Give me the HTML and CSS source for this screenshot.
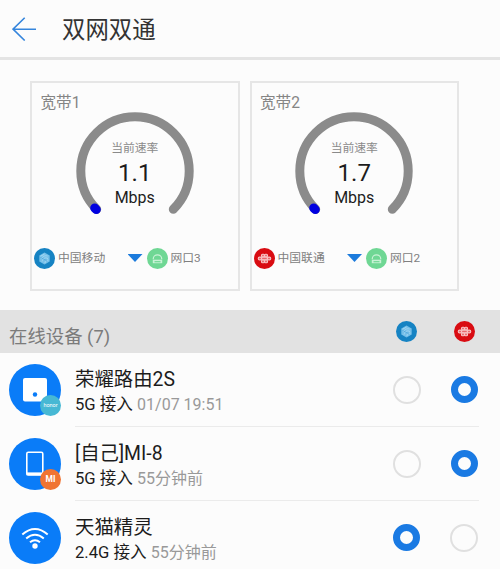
FILE: index.html
```html
<!DOCTYPE html>
<html lang="zh-CN">
<head>
    <meta charset="UTF-8">
    <meta name="viewport" content="width=device-width, initial-scale=1.0">
    <title>双网双通</title>
    <link rel="stylesheet" href="styles.css">
</head>
<body>
    <!-- shared icons -->
    <svg class="defs" width="0" height="0">
        <symbol id="mobile" viewBox="0 0 21 21">
            <circle cx="10.5" cy="10.5" r="10.5" fill="#1683c3"/>
            <path d="M10.5 4.5l5.2 3v6l-5.2 3-5.2-3v-6z" fill="#75bfe9"/>
            <path d="M6.5 8.2l4-2M7 11c2-3 4-3.6 6.5-3M8 13.5c1-3 3-4.5 6-3M11 15c0-2 1-3 3.5-3" fill="none" stroke="#a5d8f3" stroke-width="1"/>
            <path d="M6.3 9.7c2.5.2 3.7 2.5 6.7 2.7" fill="none" stroke="#4aa3da" stroke-width=".7"/>
        </symbol>
        <symbol id="unicom" viewBox="0 0 21 21">
            <circle cx="10.5" cy="10.5" r="10.5" fill="#d90c12"/>
            <g fill="#e8686c" stroke="#f8c4c5" stroke-width="1.1">
                <rect x="7.5" y="6.3" width="3" height="2.7" rx="1"/>
                <rect x="10.5" y="6.3" width="3" height="2.7" rx="1"/>
                <rect x="4.3" y="9.1" width="3.3" height="2.8" rx="1.2"/>
                <rect x="7.6" y="9.1" width="5.8" height="2.8" rx="1"/>
                <rect x="13.4" y="9.1" width="3.3" height="2.8" rx="1.2"/>
                <rect x="7.5" y="12" width="3" height="2.7" rx="1"/>
                <rect x="10.5" y="12" width="3" height="2.7" rx="1"/>
            </g>
        </symbol>
        <symbol id="port" viewBox="0 0 21 21">
            <circle cx="10.5" cy="10.5" r="10.5" fill="#6fd794"/>
            <path d="M6.3 11.2v-.7a4.2 3.7 0 0 1 8.4 0v.7" fill="none" stroke="#c9f2d6" stroke-width="1.2"/>
            <path d="M5.8 11.7h9.4v3.5H5.8z" fill="#c9f2d6"/>
            <path d="M7.5 13.7h6" stroke="#6fd794" stroke-width="1.2"/>
        </symbol>
        <symbol id="gauge" viewBox="0 0 118 118">
            <path d="M20.7 97.3a54.2 54.2 0 1 1 76.6 0" fill="none" stroke="#8b8b8b" stroke-width="9" stroke-linecap="round"/>
            <path d="M18.7 96l1.6 1.6" fill="none" stroke="#0000e0" stroke-width="9" stroke-linecap="round"/>
        </symbol>
    </svg>

    <header class="topbar">
        <svg class="back" width="24" height="24" viewBox="0 0 24 24">
            <path d="M12.7 .7L1 12.2l11.7 11.3M1 12.2h23" fill="none" stroke="#3585dc" stroke-width="1.6"/>
        </svg>
        <h1>双网双通</h1>
    </header>

    <section class="cards">
        <div class="card">
            <h2>宽带1</h2>
            <div class="gauge">
                <svg width="118" height="118"><use href="#gauge"/></svg>
                <div class="reading">
                    <span class="label">当前速率</span>
                    <span class="speed">1.1</span>
                    <span class="unit">Mbps</span>
                </div>
            </div>
            <div class="links">
                <svg width="21" height="21"><use href="#mobile"/></svg>
                <span class="isp">中国移动</span>
                <span class="arrow"></span>
                <svg width="21" height="21"><use href="#port"/></svg>
                <span>网口3</span>
            </div>
        </div>
        <div class="card">
            <h2>宽带2</h2>
            <div class="gauge">
                <svg width="118" height="118"><use href="#gauge"/></svg>
                <div class="reading">
                    <span class="label">当前速率</span>
                    <span class="speed">1.7</span>
                    <span class="unit">Mbps</span>
                </div>
            </div>
            <div class="links">
                <svg width="21" height="21"><use href="#unicom"/></svg>
                <span class="isp">中国联通</span>
                <span class="arrow"></span>
                <svg width="21" height="21"><use href="#port"/></svg>
                <span>网口2</span>
            </div>
        </div>
    </section>

    <div class="list-head">
        <h3>在线设备 (7)</h3>
        <div class="choice">
            <svg width="21" height="21"><use href="#mobile"/></svg>
            <svg width="21" height="21"><use href="#unicom"/></svg>
        </div>
    </div>

    <ul class="devices">
        <li>
            <div class="avatar">
                <svg width="52" height="52" viewBox="0 0 52 52">
                    <rect x="14" y="14" width="24" height="23.5" rx="2" fill="#fff"/>
                    <circle cx="26" cy="30.5" r="2.2" fill="#0a7cf8"/>
                </svg>
                <span class="badge honor">honor</span>
            </div>
            <div class="info">
                <div class="text">
                    <p class="name">荣耀路由2S</p>
                    <p class="meta">5G 接入 <span>01/07 19:51</span></p>
                </div>
                <div class="choice">
                    <span class="radio"></span>
                    <span class="radio on"></span>
                </div>
            </div>
        </li>
        <li>
            <div class="avatar">
                <svg width="52" height="52" viewBox="0 0 52 52">
                    <rect x="17.8" y="14.2" width="16" height="22.8" rx="1.5" fill="none" stroke="#fff" stroke-width="1.6"/>
                    <path d="M17.5 35.8h16.5" stroke="#fff" stroke-width="2.8"/>
                </svg>
                <span class="badge mi">MI</span>
            </div>
            <div class="info">
                <div class="text">
                    <p class="name">[自己]MI-8</p>
                    <p class="meta">5G 接入 <span>55分钟前</span></p>
                </div>
                <div class="choice">
                    <span class="radio"></span>
                    <span class="radio on"></span>
                </div>
            </div>
        </li>
        <li>
            <div class="avatar">
                <svg width="52" height="52" viewBox="0 0 52 52">
                    <g fill="none" stroke="#fff" stroke-width="2">
                        <path d="M13.3 22.5q12.7-11 25.4 0"/>
                        <path d="M17.2 26.5q8.800-7.5 17.6 0"/>
                        <path d="M21 30.3q5-4 10 0"/>
                    </g>
                    <circle cx="26" cy="34" r="2.7" fill="#fff"/>
                </svg>
            </div>
            <div class="info">
                <div class="text">
                    <p class="name">天猫精灵</p>
                    <p class="meta">2.4G 接入 <span>55分钟前</span></p>
                </div>
                <div class="choice">
                    <span class="radio on"></span>
                    <span class="radio"></span>
                </div>
            </div>
        </li>
    </ul>
</body>
</html>
```
FILE: styles.css
```css
* {
    box-sizing: border-box;
}
body {
    margin: 0;
    height: 569px;
    overflow: hidden;
    background: #fcfcfc;
    color: #1c1c1c;
    font-family: Roboto, "Noto Sans CJK SC", sans-serif;
}
h1, h2, h3, p, ul {
    margin: 0;
    padding: 0;
    font-weight: 400;
}
svg {
    display: block;
    flex: none;
}
.defs {
    position: absolute;
}

.topbar {
    height: 60px;
    display: flex;
    align-items: center;
    gap: 26px;
    padding-left: 12px;
    border-bottom: 3px solid #e4e4e4;
}
.topbar h1 {
    padding-top: 3px;
    font-size: 23.4px;
    line-height: 30px;
    color: #333;
}

.cards {
    display: flex;
    gap: 10px;
    padding: 21px 30px 19px;
}
.card {
    width: 209.5px;
    height: 210px;
    border: 2px solid #e6e6e6;
    display: flex;
    flex-direction: column;
}
.card h2 {
    height: 29px;
    padding: 9px 0 0 8.5px;
    font-size: 15.6px;
    line-height: 22px;
    color: #858585;
}
.gauge {
    display: grid;
    justify-content: center;
}
.gauge > * {
    grid-area: 1 / 1;
}
.reading {
    display: flex;
    flex-direction: column;
    align-items: center;
    padding-top: 28px;
    white-space: nowrap;
}
.label {
    font-size: 11.8px;
    line-height: 16px;
    color: #8a8a8a;
}
.speed {
    font-size: 24px;
    line-height: 28px;
    margin-top: 3px;
}
.unit {
    font-size: 16px;
    line-height: 20px;
    margin-top: 1px;
}
.links {
    display: flex;
    align-items: center;
    gap: 3px;
    margin-top: 17.5px;
    padding-left: 2px;
    font-size: 11.8px;
    line-height: 21px;
    color: #808080;
}
.isp {
    width: 66.5px;
}
.arrow {
    width: 15px;
    height: 8px;
    margin-right: 1px;
    background: #1c7bdc;
    clip-path: polygon(0 0, 100% 0, 50% 100%);
}

.list-head {
    height: 43px;
    display: flex;
    justify-content: space-between;
    align-items: center;
    padding: 0 21px 0 9px;
    background: #e2e2e2;
}
.list-head h3 {
    padding-top: 10px;
    font-size: 18.4px;
    line-height: 26px;
    color: #7b7b7b;
}
.choice {
    width: 115px;
    margin-right: -14px;
    display: flex;
    flex: none;
}
.choice > * {
    margin: 0 auto;
}

.devices {
    list-style: none;
}
.devices li {
    height: 74px;
    display: flex;
    align-items: center;
    gap: 14px;
    padding: 0 21px 0 9px;
}
.avatar {
    position: relative;
    width: 52px;
    height: 52px;
    border-radius: 50%;
    background: #0a7cf8;
}
.badge {
    position: absolute;
    right: 0;
    bottom: 0;
    width: 21px;
    height: 21px;
    border-radius: 50%;
    color: #fff;
    text-align: center;
    line-height: 21px;
}
.honor {
    background: #47b8d4;
    font-size: 5.5px;
}
.mi {
    background: #f07433;
    font-size: 8.5px;
    font-weight: 700;
}
.info {
    flex: 1;
    height: 74px;
    display: flex;
    justify-content: space-between;
    align-items: center;
    border-bottom: 1px solid #ebebeb;
}
.text {
    padding-top: 5px;
}
.name {
    font-size: 19.4px;
    line-height: 26px;
}
.meta {
    font-size: 16.6px;
    line-height: 24px;
}
.meta span {
    font-size: 16px;
    color: #999;
}
.radio {
    width: 28px;
    height: 28px;
    border: 2px solid #e0e0e0;
    border-radius: 50%;
}
.radio.on {
    width: 27px;
    height: 27px;
    border: 7px solid #1a7ae3;
}
```
